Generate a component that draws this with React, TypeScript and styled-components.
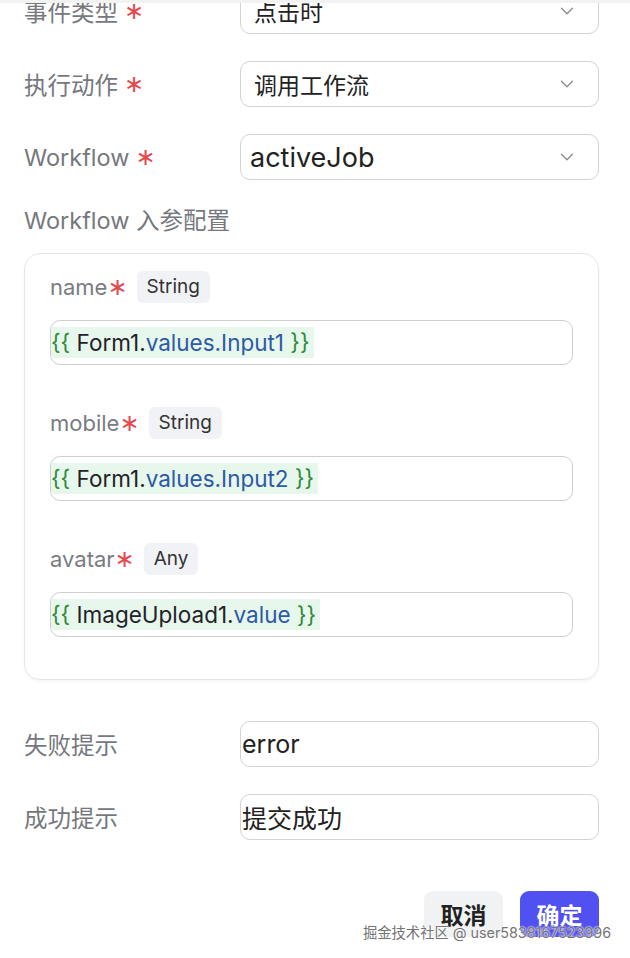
import styled, { createGlobalStyle } from 'styled-components';
import { ChevronDown } from 'lucide-react';

const GlobalStyle = createGlobalStyle`
  body {
    margin: 0;
    background: #fff;
    font-family: Inter, "Noto Sans CJK SC", sans-serif;
  }
`;

const Page = styled.div`
  position: relative;
  width: 630px;
  height: 958px;
  overflow: hidden;
  box-sizing: border-box;
  border-top: 3px solid #f2f2f2;
`;

const Form = styled.div`
  display: flex;
  flex-direction: column;
  margin-top: -15px;
  padding: 0 31px 0 24px;
`;

const Row = styled.div`
  display: grid;
  grid-template-columns: 216px 1fr;
  align-items: center;
  height: 46px;
  margin-bottom: 27px;
`;

const Label = styled.div`
  display: flex;
  align-items: center;
  font-size: 23.5px;
  color: #76787e;
`;

const Star = styled.span<{ $gap?: number }>`
  color: #e5484d;
  font-family: "DejaVu Sans", sans-serif;
  font-size: 24px;
  margin-left: ${(p) => p.$gap ?? 0}px;
`;

const Select = styled.div<{ $big?: boolean }>`
  display: flex;
  align-items: center;
  justify-content: space-between;
  height: 46px;
  box-sizing: border-box;
  border: 1.5px solid #d3d3d3;
  border-radius: 10px;
  padding: 0 20px 0 ${(p) => (p.$big ? 9 : 13)}px;
  font-size: ${(p) => (p.$big ? 27 : 23)}px;
  color: #222;
`;

const TextInput = styled.div`
  display: flex;
  align-items: center;
  height: 46px;
  box-sizing: border-box;
  border: 1.5px solid #d3d3d3;
  border-radius: 10px;
  padding: 0 1px;
  font-size: 25px;
  color: #222;
`;

const SectionTitle = styled.div`
  height: 28px;
  line-height: 28px;
  margin-bottom: 18px;
  font-size: 23.5px;
  color: #76787e;
`;

const Card = styled.div`
  border: 1.5px solid #e6e6e6;
  border-radius: 16px;
  padding: 17px 25px 0;
  margin-bottom: 41px;
  box-shadow: 0 2px 3px rgba(0, 0, 0, 0.04);
`;

const Param = styled.div`
  margin-bottom: 42px;
`;

const ParamHead = styled.div`
  display: flex;
  align-items: center;
  height: 32px;
`;

const ParamName = styled.span`
  font-size: 22px;
  color: #7a7c82;
`;

const Tag = styled.span`
  height: 32px;
  line-height: 32px;
  padding: 0 10px;
  margin-left: 9px;
  border-radius: 6px;
  background: #f1f2f6;
  font-size: 19px;
  color: #333;
`;

const ParamInput = styled.div`
  display: flex;
  align-items: center;
  margin-top: 17px;
  height: 45px;
  box-sizing: border-box;
  border: 1.5px solid #cfcfcf;
  border-radius: 10px;
  padding: 0;
`;

const Code = styled.span`
  height: 31px;
  line-height: 31px;
  padding-right: 4px;
  background: #e8f7ec;
  font-size: 22.5px;
  white-space: pre;
`;

const Tok = styled.span<{ $kind: 'brace' | 'id' | 'prop' }>`
  color: ${(p) =>
    p.$kind === 'brace' ? '#2f8a3b' : p.$kind === 'prop' ? '#2c5aa6' : '#1f2329'};
`;

const Footer = styled.div`
  display: flex;
  justify-content: flex-end;
  gap: 17px;
  margin-top: 24px;
`;

const Button = styled.button<{ $primary?: boolean }>`
  width: 79px;
  height: 46px;
  border: none;
  border-radius: 9px;
  font-family: inherit;
  font-size: 23px;
  font-weight: 700;
  background: ${(p) => (p.$primary ? '#5150f0' : '#f1f2f4')};
  color: ${(p) => (p.$primary ? '#fff' : '#222')};
`;

const Watermark = styled.div`
  position: absolute;
  right: 19px;
  top: 918px;
  font-size: 14.3px;
  color: #747474;
  white-space: nowrap;
  text-shadow: 0 0 2px #fff, 0 0 2px #fff;
`;

const Arrow = () => <ChevronDown size={22} strokeWidth={1.4} color="#8a8a8a" />;

interface ParamProps {
  name: string;
  type: string;
  id: string;
  path?: string;
}

const ParamItem = ({ name, type, id, path }: ParamProps) => (
  <Param>
    <ParamHead>
      <ParamName>{name}</ParamName>
      <Star>∗</Star>
      <Tag>{type}</Tag>
    </ParamHead>
    <ParamInput>
      <Code>
        <Tok $kind="brace">{'{{ '}</Tok>
        <Tok $kind="id">{id}.</Tok>
        {path && <Tok $kind="prop">{path}</Tok>}
        <Tok $kind="brace">{' }}'}</Tok>
      </Code>
    </ParamInput>
  </Param>
);

const App = () => {
  return (
    <Page>
      <GlobalStyle />
      <Form>
        <Row>
          <Label>
            事件类型<Star $gap={6}>∗</Star>
          </Label>
          <Select>
            点击时
            <Arrow />
          </Select>
        </Row>
        <Row>
          <Label>
            执行动作<Star $gap={6}>∗</Star>
          </Label>
          <Select>
            调用工作流
            <Arrow />
          </Select>
        </Row>
        <Row>
          <Label>
            Workflow<Star $gap={6}>∗</Star>
          </Label>
          <Select $big>
            activeJob
            <Arrow />
          </Select>
        </Row>

        <SectionTitle>Workflow 入参配置</SectionTitle>
        <Card>
          <ParamItem name="name" type="String" id="Form1" path="values.Input1" />
          <ParamItem name="mobile" type="String" id="Form1" path="values.Input2" />
          <ParamItem name="avatar" type="Any" id="ImageUpload1" path="value" />
        </Card>

        <Row>
          <Label>失败提示</Label>
          <TextInput>error</TextInput>
        </Row>
        <Row>
          <Label>成功提示</Label>
          <TextInput>提交成功</TextInput>
        </Row>

        <Footer>
          <Button>取消</Button>
          <Button $primary>确定</Button>
        </Footer>
      </Form>
      <Watermark>掘金技术社区 @ user5838167523996</Watermark>
    </Page>
  );
};

export default App;
